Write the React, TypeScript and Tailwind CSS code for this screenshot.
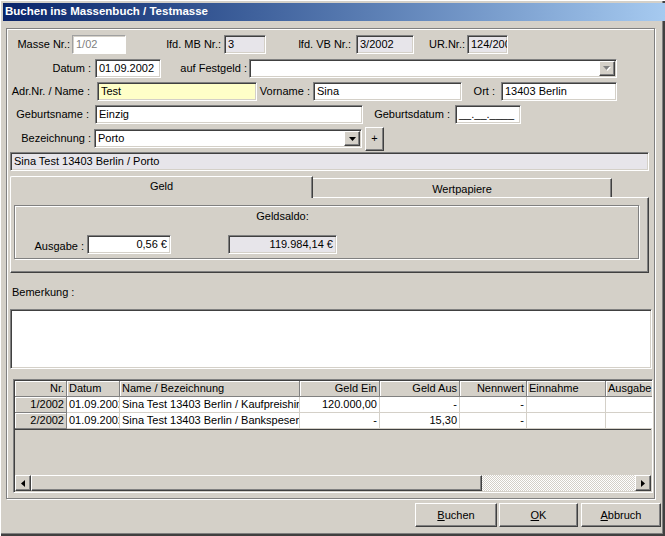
import React from 'react';

// Win classic 3D borders
const sunken =
  'border border-t-[#808080] border-l-[#808080] border-r-white border-b-white shadow-[inset_1px_1px_0_#404040,inset_-1px_-1px_0_#d4d0c8]';
const raised =
  'border border-t-white border-l-white border-r-[#404040] border-b-[#404040] shadow-[inset_-1px_-1px_0_#808080,inset_1px_1px_0_#d4d0c8]';
const etched = 'border border-[#808080] shadow-[inset_1px_1px_0_#fff,1px_1px_0_#fff]';

function Label({ className, children }: { className: string; children: React.ReactNode }) {
  return <span className={'shrink-0 whitespace-nowrap text-right ' + className}>{children}</span>;
}

function Field({ className, children }: { className: string; children?: React.ReactNode }) {
  return (
    <div className={sunken + ' flex h-[19px] shrink-0 items-center overflow-hidden whitespace-nowrap px-[3px] ' + className}>
      {children}
    </div>
  );
}

function Arrow({ disabled = false }: { disabled?: boolean }) {
  if (disabled) {
    return (
      <svg width="8" height="5" viewBox="0 0 8 5">
        <path d="M1 1h7L4.5 5z" fill="#ffffff" />
        <path d="M0 0h7L3.5 4z" fill="#808080" />
      </svg>
    );
  }
  return (
    <svg width="7" height="4" viewBox="0 0 7 4">
      <path d="M0 0h7L3.5 4z" fill="#000" />
    </svg>
  );
}

function Combo({ className, children, disabled = false }: { className: string; children?: React.ReactNode; disabled?: boolean }) {
  return (
    <div className={sunken + ' flex h-[19px] shrink-0 bg-white p-[1px] ' + className}>
      <div className="flex flex-1 items-center overflow-hidden whitespace-nowrap px-[2px]">{children}</div>
      <div className={raised + ' flex w-[16px] items-center justify-center bg-[#d4d0c8]'}>
        <Arrow disabled={disabled} />
      </div>
    </div>
  );
}

function Button({ className, children }: { className: string; children: React.ReactNode }) {
  return (
    <div className={raised + ' flex h-[24px] items-center justify-center bg-[#d4d0c8] ' + className}>{children}</div>
  );
}

const cols = [
  { w: 'w-[52px]', right: true, h: 'Nr.' },
  { w: 'w-[53px]', right: false, h: 'Datum' },
  { w: 'w-[180px]', right: false, h: 'Name / Bezeichnung' },
  { w: 'w-[80px]', right: true, h: 'Geld Ein' },
  { w: 'w-[80px]', right: true, h: 'Geld Aus' },
  { w: 'w-[67px]', right: true, h: 'Nennwert' },
  { w: 'w-[79px]', right: false, h: 'Einnahme' },
  { w: 'w-[80px]', right: false, h: 'Ausgabe' },
];

const rows = [
  ['1/2002', '01.09.2002', 'Sina Test 13403 Berlin / Kaufpreishinterlegung', '120.000,00', '-', '-', '', ''],
  ['2/2002', '01.09.2002', 'Sina Test 13403 Berlin / Bankspesen', '-', '15,30', '-', '', ''],
];

const fixedCell =
  'bg-[#d4d0c8] border-r border-b border-r-[#808080] border-b-[#808080] shadow-[inset_1px_1px_0_#fff]';
const dataCell = 'bg-white border-r border-b border-r-[#d4d0c8] border-b-[#d4d0c8]';

function Grid() {
  return (
    <div className={sunken + ' ml-[6px] mt-[10px] flex h-[114px] w-[640px] flex-col overflow-hidden bg-[#d4d0c8] p-[1px]'}>
      <div className="flex h-[16px] shrink-0">
        {cols.map((c) => (
          <div
            key={c.h}
            className={fixedCell + ' shrink-0 overflow-hidden whitespace-nowrap px-[2px] leading-[15px] ' + c.w + (c.right ? ' text-right' : '')}
          >
            {c.h}
          </div>
        ))}
      </div>
      {rows.map((r, i) => (
        <div key={i} className="flex h-[16px] shrink-0">
          {r.map((v, j) => (
            <div
              key={j}
              className={
                (j === 0 ? fixedCell : dataCell) +
                ' shrink-0 overflow-hidden whitespace-nowrap px-[2px] leading-[15px] ' +
                cols[j].w +
                (cols[j].right ? ' text-right' : '')
              }
            >
              {v}
            </div>
          ))}
        </div>
      ))}
      <div className="h-[1px] shrink-0 bg-[#404040]" />
      <div className="flex-1" />
      <div className="flex h-[16px] shrink-0">
        <div className={raised + ' flex w-[16px] shrink-0 items-center justify-center bg-[#d4d0c8]'}>
          <svg width="4" height="7" viewBox="0 0 4 7">
            <path d="M4 0v7L0 3.5z" fill="#000" />
          </svg>
        </div>
        <div className={raised + ' w-[451px] shrink-0 bg-[#d4d0c8]'} />
        <div className="flex-1 bg-[repeating-conic-gradient(#d4d0c8_0%_25%,#ffffff_0%_50%)] bg-[length:2px_2px]" />
        <div className={raised + ' flex w-[16px] shrink-0 items-center justify-center bg-[#d4d0c8]'}>
          <svg width="4" height="7" viewBox="0 0 4 7">
            <path d="M0 0v7L4 3.5z" fill="#000" />
          </svg>
        </div>
      </div>
    </div>
  );
}

export default function App() {
  return (
    <div className="relative h-[536px] w-[665px] overflow-hidden bg-[#d4d0c8] font-['Liberation_Sans',Arial,sans-serif] text-[11px] text-black shadow-[inset_1px_1px_0_#fff,inset_-2px_-2px_0_#404040,inset_-3px_-3px_0_#808080]">
      {/* title bar */}
      <div className="ml-[3px] mt-[3px] flex h-[18px] items-center bg-gradient-to-r from-[#0a246a] to-[#a6caf0] pl-[2px] text-[11.5px] font-bold text-white">
        Buchen ins Massenbuch / Testmasse
      </div>

      {/* main panel */}
      <div className={etched + ' ml-[6px] mt-[7px] flex h-[471px] w-[649px] flex-col'}>
        <div className="mt-[6px] flex h-[19px] items-center">
          <Label className="w-[63px]">Masse Nr.:</Label>
          <div className="ml-[2px] flex h-[19px] w-[54px] shrink-0 items-center border border-t-[#a0a0a0] border-l-[#a0a0a0] border-r-white border-b-white px-[3px] text-[#808080] shadow-[inset_1px_1px_0_#d4d0c8] bg-white">
            1/02
          </div>
          <Label className="w-[95px]">lfd. MB Nr.:</Label>
          <Field className="ml-[3px] w-[42px] bg-[#e7e5ea]">3</Field>
          <Label className="w-[85px]">lfd. VB Nr.:</Label>
          <Field className="ml-[5px] w-[58px] bg-[#e7e5ea]">3/2002</Field>
          <Label className="w-[51px]">UR.Nr.:</Label>
          <Field className="ml-[2px] w-[41px] bg-[#e7e5ea]">124/2002</Field>
        </div>

        <div className="mt-[5px] flex h-[19px] items-center">
          <Label className="w-[84px]">Datum :</Label>
          <Field className="ml-[4px] w-[66px] bg-white">01.09.2002</Field>
          <Label className="w-[86px]">auf Festgeld :</Label>
          <Combo className="ml-[2px] w-[368px]" disabled />
        </div>

        <div className="mt-[4px] flex h-[19px] items-center">
          <Label className="w-[83px]">Adr.Nr. / Name :</Label>
          <Field className="ml-[7px] w-[160px] bg-[#ffffc8]">Test</Field>
          <Label className="w-[53px]">Vorname :</Label>
          <Field className="ml-[3px] w-[149px] bg-white">Sina</Field>
          <Label className="w-[33px]">Ort :</Label>
          <Field className="ml-[6px] w-[116px] bg-white">13403 Berlin</Field>
        </div>

        <div className="mt-[4px] flex h-[19px] items-center">
          <Label className="w-[82px]">Geburtsname :</Label>
          <Field className="ml-[6px] w-[268px] bg-white">Einzig</Field>
          <Label className="w-[87px]">Geburtsdatum :</Label>
          <Field className="ml-[5px] w-[66px] bg-white">__.__.____</Field>
        </div>

        <div className="mt-[5px] flex h-[19px] items-center">
          <Label className="w-[84px]">Bezeichnung :</Label>
          <Combo className="ml-[3px] w-[268px]">Porto</Combo>
          <Button className="ml-[3px] h-[19px] w-[19px]">+</Button>
        </div>

        <div className="mt-[4px] flex">
          <Field className="ml-[3px] w-[639px] bg-[#e7e5ea]">Sina Test 13403 Berlin / Porto</Field>
        </div>

        {/* tabs */}
        <div className="ml-[3px] mt-[5px] flex h-[21px] w-[639px] items-end">
          <div className="relative z-10 -mb-[1px] flex h-[22px] w-[303px] items-center justify-center rounded-tl-[2px] border-l border-t border-r border-l-white border-t-white border-r-[#404040] bg-[#d4d0c8] pb-[3px] shadow-[inset_-1px_0_0_#808080]">
            Geld
          </div>
          <div className="flex h-[19px] w-[299px] items-center justify-center border-t border-r border-t-white border-r-[#404040] pt-[2px] shadow-[inset_-1px_0_0_#808080]">
            Wertpapiere
          </div>
        </div>
        <div className="ml-[3px] h-[76px] w-[639px] border border-t-white border-l-white border-r-[#404040] border-b-[#404040] pt-[7px] shadow-[inset_-1px_-1px_0_#808080]">
          <div className={etched + ' ml-[3px] flex h-[54px] w-[625px] items-end pb-[4px]'}>
            <Label className="ml-[17px] w-[52px]">Ausgabe :</Label>
            <Field className="ml-[3px] h-[18px] w-[84px] justify-end bg-white">0,56 €</Field>
            <div className="ml-[57px] flex flex-col items-center">
              <span className="mb-[11px]">Geldsaldo:</span>
              <Field className="h-[18px] w-[109px] justify-end bg-[#e7e5ea]">119.984,14 €</Field>
            </div>
          </div>
        </div>

        <div className="ml-[5px] mt-[11px] h-[16px] leading-[16px]">Bemerkung :</div>
        <div className={sunken + ' ml-[3px] mt-[9px] h-[60px] w-[642px] bg-white'} />

        <Grid />
      </div>

      {/* buttons */}
      <div className="mt-[4px] flex justify-end pr-[4px]">
        <Button className="w-[82px]">
          <span className="underline underline-offset-[1px]">B</span>uchen
        </Button>
        <Button className="ml-[2px] w-[79px]">
          <span className="underline underline-offset-[1px]">O</span>K
        </Button>
        <Button className="ml-[3px] w-[80px]">
          <span className="underline underline-offset-[1px]">A</span>bbruch
        </Button>
      </div>
    </div>
  );
}
